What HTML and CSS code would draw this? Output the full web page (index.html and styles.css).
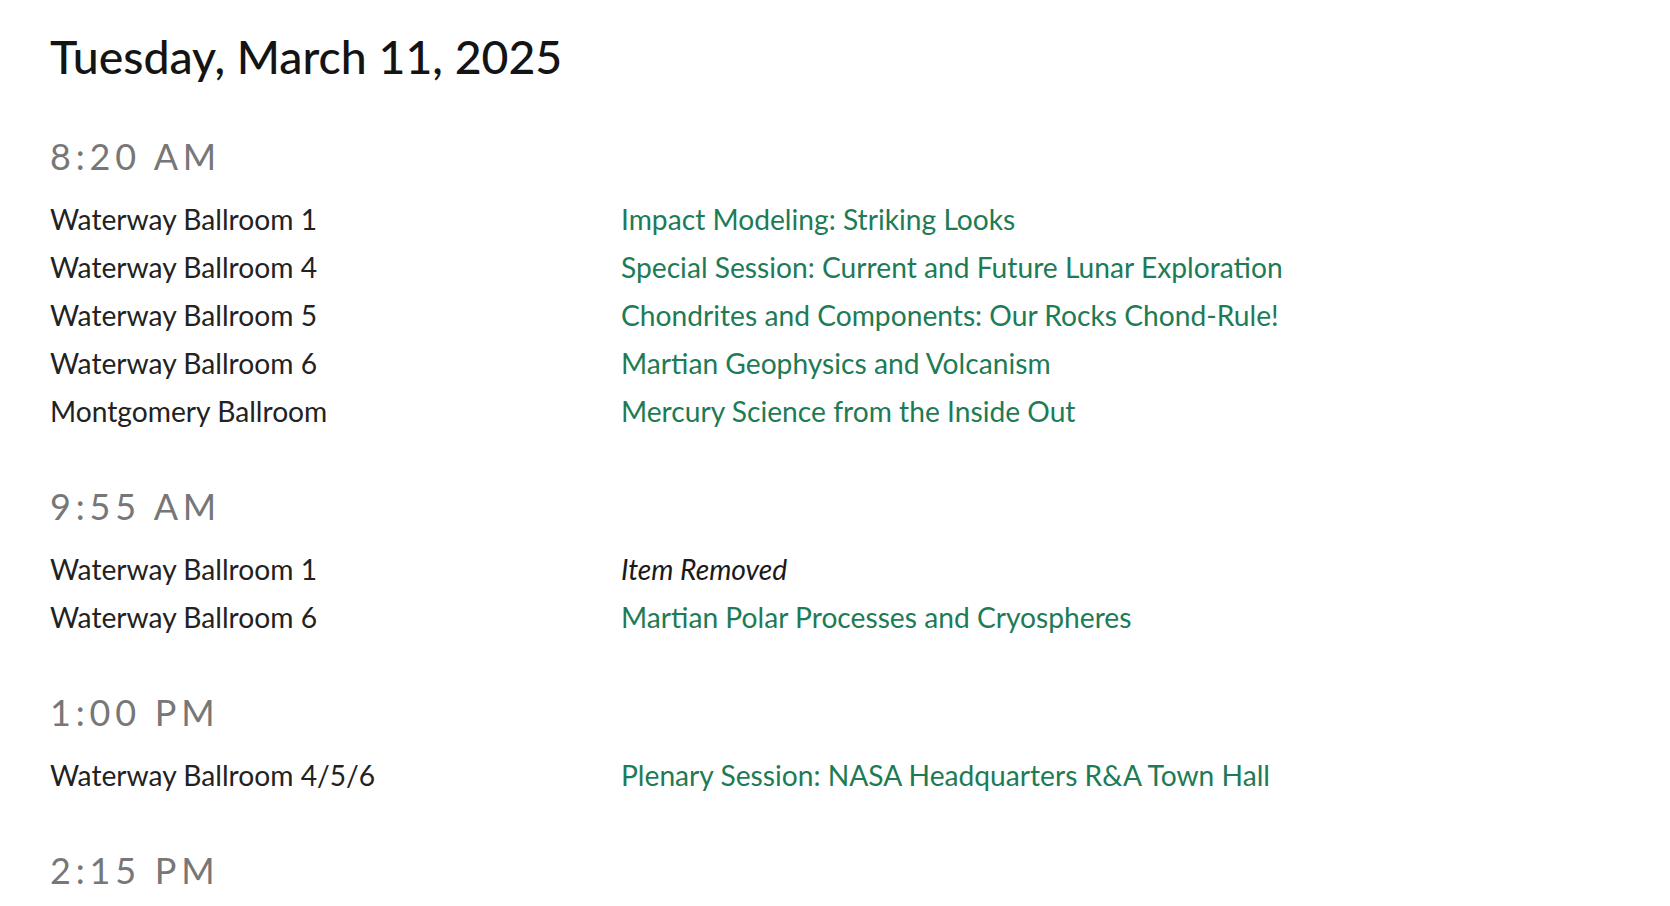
FILE: index.html
```html
<!DOCTYPE html>
<html lang="en">
<head>
<meta charset="utf-8">
<title>Tuesday, March 11, 2025</title>
<link rel="stylesheet" href="styles.css">
</head>
<body>
<main class="page">
  <h1 class="day">Tuesday, March 11, 2025</h1>

  <section class="slot">
    <h2 class="time">8:20 AM</h2>
    <div class="rows">
      <div class="row"><span class="room">Waterway Ballroom 1</span><a class="session" href="#">Impact Modeling: Striking Looks</a></div>
      <div class="row"><span class="room">Waterway Ballroom 4</span><a class="session" href="#">Special Session: Current and Future Lunar Exploration</a></div>
      <div class="row"><span class="room">Waterway Ballroom 5</span><a class="session" href="#">Chondrites and Components: Our Rocks Chond-Rule!</a></div>
      <div class="row"><span class="room">Waterway Ballroom 6</span><a class="session" href="#">Martian Geophysics and Volcanism</a></div>
      <div class="row"><span class="room">Montgomery Ballroom</span><a class="session" href="#">Mercury Science from the Inside Out</a></div>
    </div>
  </section>

  <section class="slot">
    <h2 class="time">9:55 AM</h2>
    <div class="rows">
      <div class="row"><span class="room">Waterway Ballroom 1</span><em class="removed">Item Removed</em></div>
      <div class="row"><span class="room">Waterway Ballroom 6</span><a class="session" href="#">Martian Polar Processes and Cryospheres</a></div>
    </div>
  </section>

  <section class="slot">
    <h2 class="time">1:00 PM</h2>
    <div class="rows">
      <div class="row"><span class="room">Waterway Ballroom 4/5/6</span><a class="session" href="#">Plenary Session: NASA Headquarters R&amp;A Town Hall</a></div>
    </div>
  </section>

  <section class="slot">
    <h2 class="time">2:15 PM</h2>
  </section>
</main>
</body>
</html>
```
FILE: styles.css
```css
html, body {
  margin: 0;
  padding: 0;
  background: #ffffff;
}

body {
  font-family: "Lato", "Open Sans", sans-serif;
  color: #222222;
}

.page {
  padding: 29px 50px 0 50px;
}

.day {
  margin: 0;
  font-size: 46.4px;
  line-height: 55px;
  font-weight: 500;
  color: #141414;
}

.slot {
  margin-top: 50px;
}

.day + .slot {
  margin-top: 51px;
}

.time {
  margin: 0 0 17px 0;
  font-size: 36px;
  line-height: 43px;
  font-weight: 400;
  letter-spacing: 4.8px;
  color: #777777;
}

.rows {
  display: flex;
  flex-direction: column;
}

.row {
  display: grid;
  grid-template-columns: 571px 1fr;
  font-size: 28.2px;
  line-height: 48px;
}

.room {
  color: #222222;
}

.session {
  color: #1d7b55;
  text-decoration: none;
}

.removed {
  font-style: italic;
  color: #1a1a1a;
}
```
